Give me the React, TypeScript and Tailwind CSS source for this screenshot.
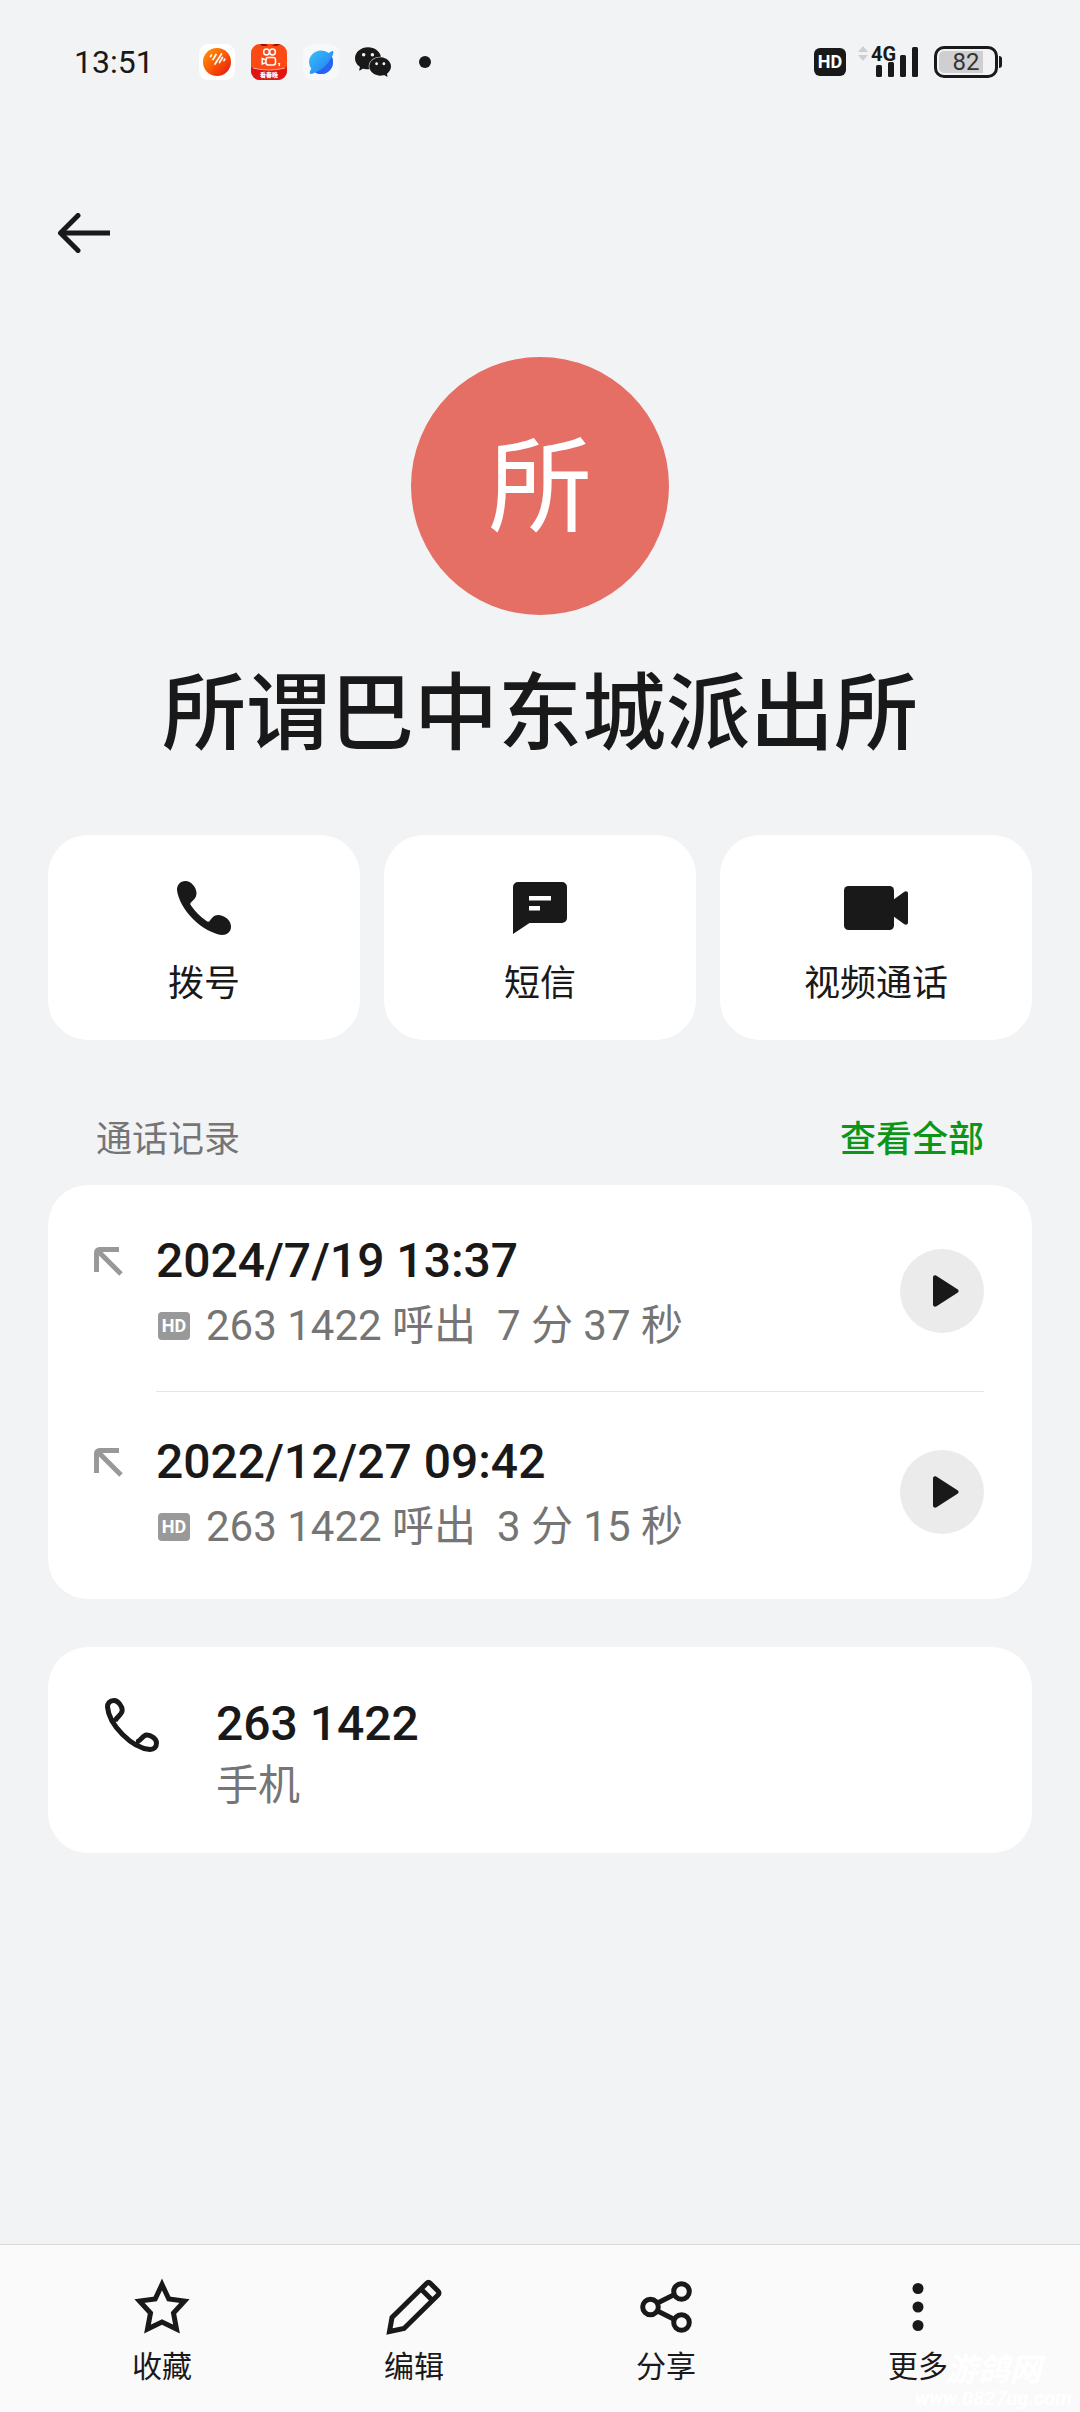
import React from 'react';
import { SiWechat } from 'react-icons/si';

interface CallRecord {
  id: number;
  date: string;
  detail: string;
}

const callRecords: CallRecord[] = [
  { id: 1, date: '2024/7/19 13:37', detail: '263 1422 呼出  7 分 37 秒' },
  { id: 2, date: '2022/12/27 09:42', detail: '263 1422 呼出  3 分 15 秒' },
];

/* Status bar icons */

const MusicAppIcon = () => (
  <svg viewBox="0 0 36 36" className="size-9" aria-hidden="true">
    <defs>
      <linearGradient id="music" x1="0" y1="0" x2="1" y2="1">
        <stop offset="0" stopColor="#ff9a00" />
        <stop offset="0.5" stopColor="#fb5a08" />
        <stop offset="1" stopColor="#e60f0f" />
      </linearGradient>
    </defs>
    <rect width="36" height="36" rx="9" fill="#fff" />
    <circle cx="18" cy="18" r="14" fill="url(#music)" />
    <path
      d="M11.5 12.5l1-1.5M14 15.5l3-5M16 20l6.5-10M20.5 18.5l3-5M25 16.5l.8-1.3"
      stroke="#fff"
      strokeWidth="1.7"
      strokeLinecap="round"
    />
  </svg>
);

const VideoAppIcon = () => (
  <svg viewBox="0 0 36 36" className="size-9" aria-hidden="true">
    <defs>
      <clipPath id="video-clip">
        <rect width="36" height="36" rx="9" />
      </clipPath>
    </defs>
    <g clipPath="url(#video-clip)">
      <rect width="36" height="36" fill="#fb4a16" />
      <path d="M9 0h6l2 2h4l3-2h6l-4 2H11z" fill="#8c1512" />
      <path d="M0 23q18 5 36 0v13H0z" fill="#e01414" />
      <path d="M2 24q16 4 32 0" stroke="#ffb08a" strokeWidth="1" fill="none" />
      <g fill="none" stroke="#fff" strokeWidth="1.5">
        <circle cx="15.5" cy="8" r="2.9" />
        <circle cx="21.5" cy="8" r="2.9" />
        <rect x="15" y="13.5" width="9.5" height="7.5" rx="2.2" />
        <path d="M15 16l-3.8-1.4v5.4l3.8-1.4" />
      </g>
      <path d="M27 19.5h1.6l-.6 2.5" stroke="#fff" strokeWidth="1.2" fill="none" />
    </g>
    <text
      x="18"
      y="33"
      textAnchor="middle"
      fill="#fff"
      className="text-[6px] font-black"
    >
      看春晚
    </text>
  </svg>
);

const BrowserAppIcon = () => (
  <svg viewBox="0 0 36 36" className="size-9" aria-hidden="true">
    <defs>
      <linearGradient id="browser" x1="0" y1="0" x2="1" y2="1">
        <stop offset="0" stopColor="#36c3f5" />
        <stop offset="1" stopColor="#2376f7" />
      </linearGradient>
    </defs>
    <rect width="36" height="36" rx="9" fill="#f7f8fa" />
    <path
      d="M18 6.5c3 0 5.5 1 7.5 2.5 1.5-1 3.5-2.5 4.5-2 1 .8 0 3.5-1 5.5.7 1.7 1 3.5 1 5.5a12 12 0 0 1-12 12c-2.5 0-4-.5-5.800-1.600-1.700.9-4.200 2-5.200 1.200-.9-.9.300-3.200 1.300-5A12 12 0 0 1 6 18.500a12 12 0 0 1 12-12z"
      fill="url(#browser)"
    />
    <path d="M28.7 13c.9 1.7 1.3 3.5 1.3 5.5a11.700 11.700 0 0 1-17.600 9.900C19.500 25.500 25 20.500 28.700 13z" fill="#2b62f0" />
  </svg>
);

const SignalIcon = () => (
  <svg viewBox="0 -4 62 44" className="h-11 w-[62px]" role="img" aria-label="4G">
    <path d="M5 2l5 6H0zM5 17l5-6H0z" fill="#cfcfd1" />
    <text x="13" y="17" fill="#19191a" className="text-[20px] font-bold">
      4G
    </text>
    <g fill="#19191a">
      <rect x="18" y="21" width="6" height="12" rx="1.5" />
      <rect x="30" y="18" width="6" height="15" rx="1.5" />
      <rect x="42" y="11" width="6" height="22" rx="1.5" />
      <rect x="54" y="3" width="6" height="30" rx="1.5" />
    </g>
  </svg>
);

/* Page icons */

const BackIcon = () => (
  <svg viewBox="0 0 54 40" className="h-10 w-[54px]" fill="none" stroke="#19191a" strokeWidth="5" aria-hidden="true">
    <path d="M54 20H5" />
    <path d="M22 2.5L4.5 20 22 37.5" strokeLinejoin="round" strokeLinecap="round" />
  </svg>
);

const DialIcon = () => (
  <svg viewBox="0 0 54 54" className="size-[54px]" fill="#19191a" aria-hidden="true">
    <path d="M8.5 0C3 0 0 4 0 9c1 9 7 20 16 29s20 15 29 16c5 0 9-3 9-8.5C54 39 47 34 41 34c-4 0-6 3-8 5.5-1 1.5-2 1.5-3.5.5C23 35.5 18 30.5 14 24.5c-1-1.5-1-2.5.5-3.5 2.5-2.5 5-4.5 5-9C19.5 6.5 14 0 8.5 0z" />
  </svg>
);

const MessageIcon = () => (
  <svg viewBox="0 0 54 52" className="h-[52px] w-[54px]" aria-hidden="true">
    <path
      fillRule="evenodd"
      fill="#19191a"
      d="M5 0h44a5 5 0 0 1 5 5v31a5 5 0 0 1-5 5H16.5L0 52V5a5 5 0 0 1 5-5zM16 14v4.5h22V14zM16 24v4.5h11V24z"
    />
  </svg>
);

const VideoIcon = () => (
  <svg viewBox="0 0 64 44" className="h-11 w-16" fill="#19191a" aria-hidden="true">
    <rect width="50" height="44" rx="4.5" />
    <path d="M49 14l11-8c2-1.3 4-.5 4 1.5v29c0 2-2 2.8-4 1.5l-11-8z" />
  </svg>
);

const OutgoingIcon = () => (
  <svg viewBox="0 0 29 29" className="size-[29px]" fill="none" stroke="#999" strokeWidth="5" aria-hidden="true">
    <path d="M2.5 25V5.5a3 3 0 0 1 3-3H25M4 4l23 23" />
  </svg>
);

const PlayIcon = () => (
  <svg viewBox="0 0 28 34" className="ml-2 h-[34px] w-7" fill="#19191a" aria-hidden="true">
    <path d="M1 3.5C1 1.5 3 .8 4.5 1.8l21 13.5c1.5 1 1.5 2.5 0 3.5l-21 13.4C3 33.2 1 32.5 1 30.5z" />
  </svg>
);

const PhoneOutlineIcon = () => (
  <svg viewBox="0 0 54 54" className="size-[54px]" fill="none" stroke="#19191a" strokeWidth="5" aria-hidden="true">
    <path d="M10 23.5c.5-4 7-6.5 7.2-11C17.5 8.5 13 2.5 9 2.5c-4.5 0-6.5 3-6.5 6.5C4 27 27 50 45 51.5c4 0 6.5-2.5 6.5-6.5 0-4.5-6-8.3-10-8-4 .3-6.5 7-10.5 7.2" />
  </svg>
);

const StarIcon = () => (
  <svg viewBox="0 0 58 58" className="size-[58px]" fill="none" stroke="#19191a" strokeWidth="5" strokeMiterlimit="8" aria-hidden="true">
    <path d="M29 6.5l6.8 14.5 15.7 2L40.5 35 43.5 51l-14.5-7-14.5 7L17.5 35l-11-12 15.7-2z" />
  </svg>
);

const PencilIcon = () => (
  <svg viewBox="0 0 56 56" className="size-14" fill="none" stroke="#19191a" strokeWidth="5" aria-hidden="true">
    <path d="M3.5 52.5l2.5-14L40.5 4.5q2-2 4 0l7.5 7.5q2 2 0 4L18 49.5zM35 10l11.5 11.5" />
  </svg>
);

const ShareIcon = () => (
  <svg viewBox="0 0 52 52" className="size-[52px]" fill="none" stroke="#19191a" strokeWidth="5" aria-hidden="true">
    <circle cx="10.5" cy="26" r="7.8" />
    <circle cx="41.5" cy="10.5" r="7.8" />
    <circle cx="41.5" cy="41.5" r="7.8" />
    <path d="M17.5 22l17-8.5M17.5 30l17 8.5" />
  </svg>
);

const MoreIcon = () => (
  <svg viewBox="0 0 12 50" className="h-[50px] w-3" fill="#19191a" aria-hidden="true">
    <circle cx="6" cy="6.5" r="5.5" />
    <circle cx="6" cy="25" r="5.5" />
    <circle cx="6" cy="43.5" r="5.5" />
  </svg>
);

const actions = [
  { label: '拨号', icon: DialIcon },
  { label: '短信', icon: MessageIcon },
  { label: '视频通话', icon: VideoIcon },
];

const tabs = [
  { label: '收藏', icon: StarIcon },
  { label: '编辑', icon: PencilIcon },
  { label: '分享', icon: ShareIcon },
  { label: '更多', icon: MoreIcon },
];

const StatusBar = () => (
  <div className="flex h-[124px] items-center justify-between pr-[78px] pl-[74px]">
    <div className="flex items-center">
      <span className="w-[125px] text-[32px] leading-10">13:51</span>
      <div className="flex items-center gap-4">
        <MusicAppIcon />
        <VideoAppIcon />
        <BrowserAppIcon />
        <SiWechat className="size-9" aria-hidden="true" />
      </div>
      <span className="ml-7 size-3 rounded-full bg-[#19191a]" />
    </div>
    <div className="flex items-center">
      <span className="flex h-7 w-8 items-center justify-center rounded-md bg-[#19191a] text-[18px] leading-7 font-bold text-white">
        HD
      </span>
      <span className="ml-3">
        <SignalIcon />
      </span>
      <span className="relative ml-[14px] flex h-8 w-16 items-center justify-center rounded-[10px] border-[3px] border-[#19191a]">
        <span className="absolute inset-y-[2px] left-[2px] w-11 rounded-l-[5px] bg-[#cfcfd1]" />
        <span className="relative text-[24px] leading-7 text-[#333]">82</span>
      </span>
      <span className="ml-px h-3 w-[3px] rounded-r-sm bg-[#19191a]" />
    </div>
  </div>
);

const CallRow = ({ record, last }: { record: CallRecord; last: boolean }) => (
  <li className="flex pr-12 pl-[46px]">
    <div className="w-[62px] shrink-0 pt-14">
      <OutgoingIcon />
    </div>
    <div className={`flex flex-1 items-center justify-between border-b pt-8 pb-[33px] ${last ? 'border-transparent' : 'border-[#e5e5e5]'}`}>
      <div className="pt-[5px]">
        <p className="text-[48px] leading-[66px] font-medium">{record.date}</p>
        <p className="flex items-center text-[42px] leading-[64px] text-[#757575]">
          <span className="mr-4 ml-0.5 flex h-7 w-8 items-center justify-center rounded-sm bg-[#999] text-[18px] leading-7 font-bold text-white">
            HD
          </span>
          <span className="whitespace-pre">{record.detail}</span>
        </p>
      </div>
      <button
        type="button"
        aria-label="播放录音"
        className="flex size-[84px] items-center justify-center rounded-full bg-[#ebebeb]"
      >
        <PlayIcon />
      </button>
    </div>
  </li>
);

export default function App() {
  return (
    <div
      lang="zh-CN"
      className="flex min-h-screen flex-col bg-[#f2f3f5] font-[Roboto,'Noto_Sans_CJK_SC',sans-serif] text-[#19191a]"
    >
      <StatusBar />

      <header className="flex h-[218px] items-center px-14">
        <button type="button" aria-label="返回">
          <BackIcon />
        </button>
      </header>

      <main className="flex-1 px-12 pb-12">
        {/* Contact */}
        <div className="mt-[15px] flex flex-col items-center">
          <div className="flex size-[258px] items-center justify-center rounded-full bg-[#e56f65] pt-1.5 text-[104px] leading-none text-white">
            所
          </div>
          <h1 className="mt-10 text-center text-[84px] leading-[120px] font-medium">所谓巴中东城派出所</h1>
        </div>

        {/* Actions */}
        <div className="mt-[60px] grid grid-cols-3 gap-6">
          {actions.map((action) => (
            <button
              key={action.label}
              type="button"
              className="flex flex-col items-center rounded-[40px] bg-white pt-[45px] pb-8"
            >
              <span className="flex h-14 items-center">
                <action.icon />
              </span>
              <span className="mt-6 text-[36px] leading-[48px]">{action.label}</span>
            </button>
          ))}
        </div>

        {/* Call history */}
        <section>
          <div className="mt-[55px] flex h-[90px] items-center justify-between px-12 text-[36px] leading-[48px]">
            <h2 className="text-[#757575]">通话记录</h2>
            <a href="#all" className="font-medium text-[#0c9618]">
              查看全部
            </a>
          </div>
          <ul className="rounded-[40px] bg-white py-1.5">
            {callRecords.map((record, index) => (
              <CallRow key={record.id} record={record} last={index === callRecords.length - 1} />
            ))}
          </ul>
        </section>

        {/* Number */}
        <section className="mt-12 flex rounded-[40px] bg-white pt-[46px] pr-12 pb-9 pl-[57px]">
          <div className="w-[111px] shrink-0 pt-[5px]">
            <PhoneOutlineIcon />
          </div>
          <div>
            <p className="text-[48px] leading-[62px] font-medium">263 1422</p>
            <p className="text-[42px] leading-[62px] text-[#757575]">手机</p>
          </div>
        </section>
      </main>

      <footer className="relative border-t border-[#d9d9d9] bg-[#fafafa] px-9 pt-[33px] pb-[25px]">
        <nav className="grid grid-cols-4">
          {tabs.map((tab) => (
            <button key={tab.label} type="button" className="flex flex-col items-center">
              <span className="flex h-[58px] items-center">
                <tab.icon />
              </span>
              <span className="mt-[11px] text-[30px] leading-10">{tab.label}</span>
            </button>
          ))}
        </nav>
        <div className="pointer-events-none absolute right-2 bottom-0.5 flex flex-col items-center font-bold text-white italic">
          <span className="text-[32px] leading-8">游鸽网</span>
          <span className="text-[20px] leading-6">www.0827ug.com</span>
        </div>
      </footer>
    </div>
  );
}
